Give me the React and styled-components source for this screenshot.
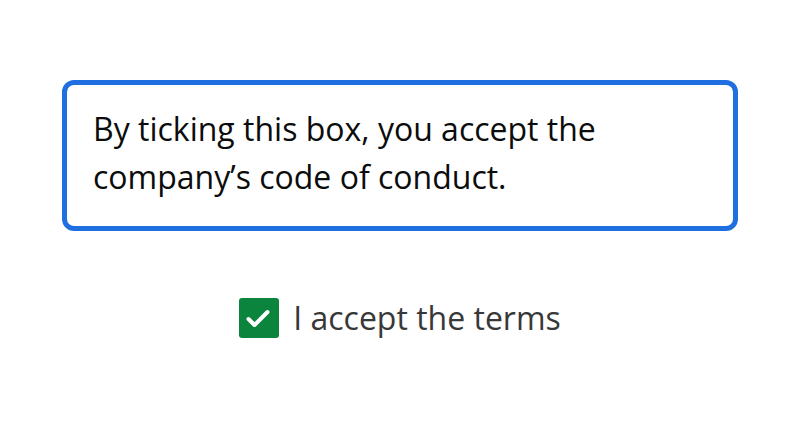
import React, { useState } from "react"
import styled, { createGlobalStyle } from 'styled-components'

const GlobalStyle = createGlobalStyle`
body {
    margin: 0;
    background: #ffffff;
    font-family: "Open Sans", "Liberation Sans", sans-serif;
}
`

const Page = styled.div`
display: flex;
flex-direction: column;
align-items: center;
padding-top: 80px;
gap: 65px;
`

const Notice = styled.div`
box-sizing: border-box;
width: 676px;
height: 151px;
border: 5px solid #1f6fe0;
border-radius: 12px;
padding: 20px 26px;
font-size: 32px;
line-height: 48px;
color: #0b0c0c;
`

const Label = styled.label`
display: flex;
align-items: center;
gap: 14px;
font-size: 32px;
color: #383838;
cursor: pointer;
`

const Box = styled.span`
width: 40px;
height: 40px;
border-radius: 3px;
background: ${props => props.checked ? '#0b843d' : '#ffffff'};
border: ${props => props.checked ? 'none' : '2px solid #383838'};
box-sizing: border-box;
display: flex;
`

export default function App() {
    const [checked, setChecked] = useState(true)
    return <>
        <GlobalStyle />
        <Page>
            <Notice>By ticking this box, you accept the company’s code of conduct.</Notice>
            <Label onClick={() => setChecked(!checked)}>
                <Box checked={checked}>
                    {checked && <svg width="40" height="40" viewBox="0 0 40 40">
                        <path d="M9.5 21 L15.5 27 L28.5 14" fill="none" stroke="#fff" strokeWidth="4" strokeLinecap="round" strokeLinejoin="round" />
                    </svg>}
                </Box>
                I accept the terms
            </Label>
        </Page>
    </>
}
